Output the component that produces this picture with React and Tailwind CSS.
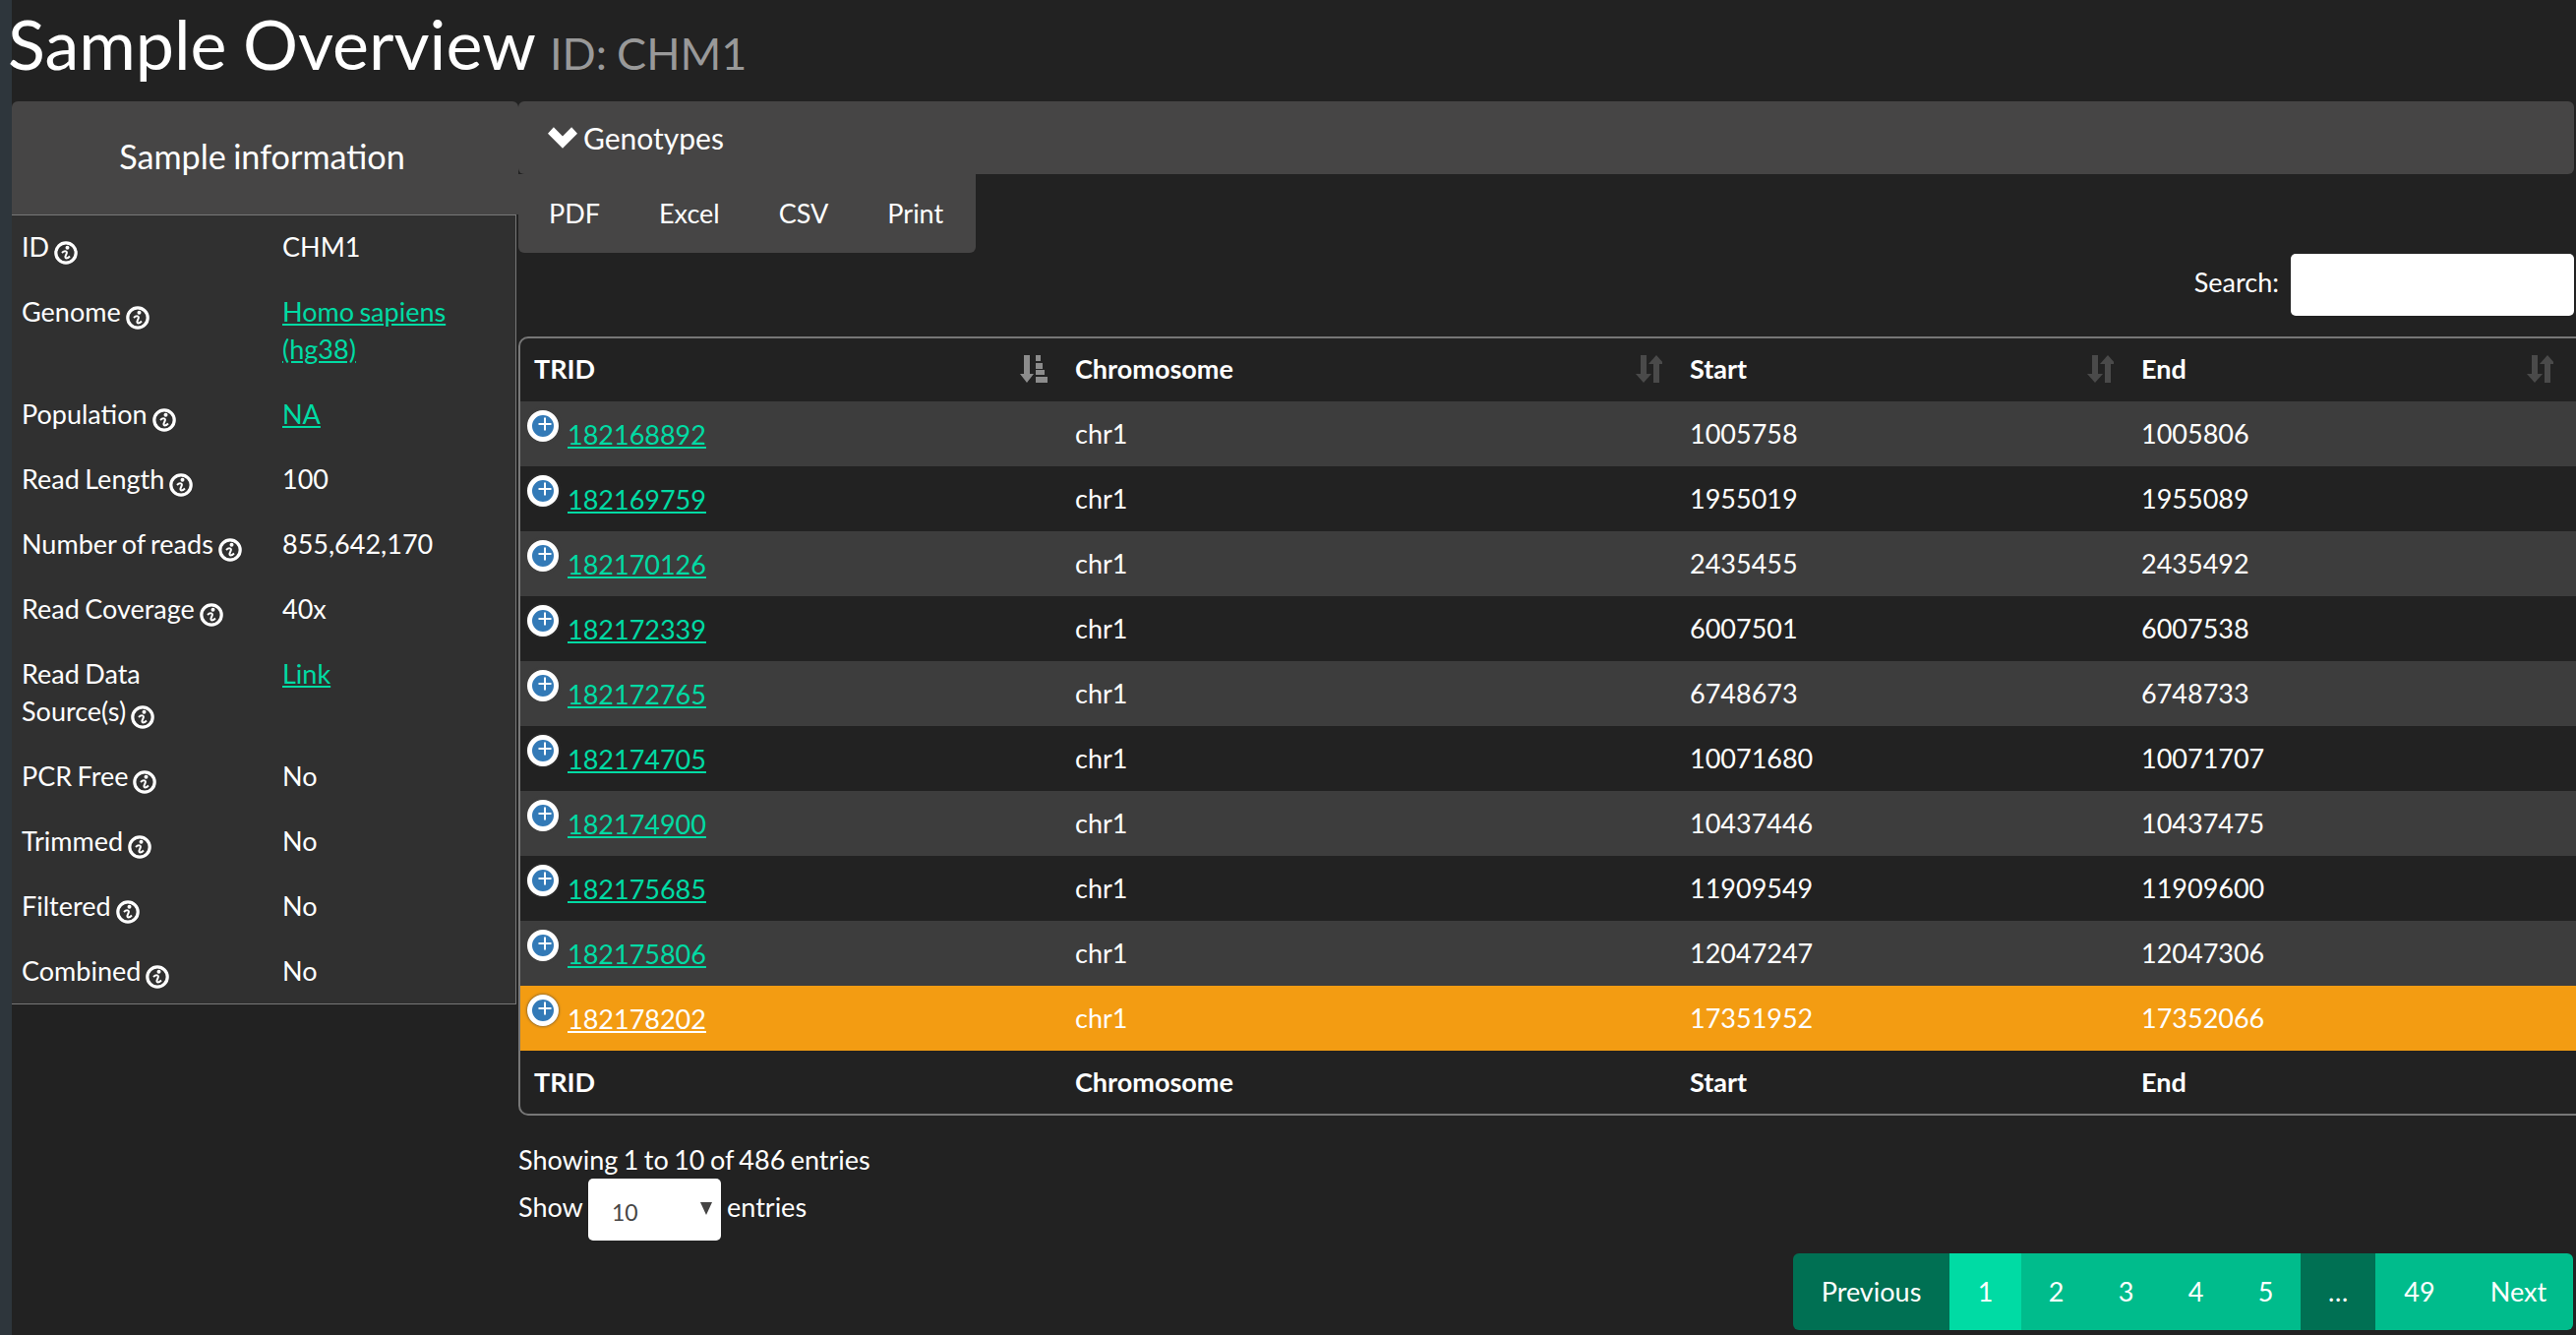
import React from 'react';

const font = { fontFamily: 'Lato, sans-serif' };

// Sample fields >>>>>>>>>>>>>>>>
const info = [
    { label: 'ID', value: 'CHM1' },
    { label: 'Genome', value: 'Homo sapiens (hg38)', link: true },
    { label: 'Population', value: 'NA', link: true },
    { label: 'Read Length', value: '100' },
    { label: 'Number of reads', value: '855,642,170' },
    { label: 'Read Coverage', value: '40x' },
    { label: 'Read Data Source(s)', value: 'Link', link: true },
    { label: 'PCR Free', value: 'No' },
    { label: 'Trimmed', value: 'No' },
    { label: 'Filtered', value: 'No' },
    { label: 'Combined', value: 'No' },
];

const rows = [
    ['182168892', '1005758', '1005806'],
    ['182169759', '1955019', '1955089'],
    ['182170126', '2435455', '2435492'],
    ['182172339', '6007501', '6007538'],
    ['182172765', '6748673', '6748733'],
    ['182174705', '10071680', '10071707'],
    ['182174900', '10437446', '10437475'],
    ['182175685', '11909549', '11909600'],
    ['182175806', '12047247', '12047306'],
    ['182178202', '17351952', '17352066'],
];

const InfoIcon = () => (
    <svg viewBox="0 0 24 24" className="inline-block w-[24px] h-[24px] ml-[5px] align-[-8px]">
        <circle cx="12" cy="12" r="10.2" fill="none" stroke="white" strokeWidth="3.2" />
        <circle cx="13.500" cy="6.800" r="2" fill="white" />
        <path d="M8 12 C10.500 9.500 13.500 10 12.800 12.500 L11.500 15.500 C11 18 13.500 18 16 15.500" fill="none" stroke="white" strokeWidth="2" />
    </svg>
);

const SortIcon = () => (
    <svg viewBox="0 0 28 28" className="w-[28px] h-[28px] shrink-0" fill="#4a4a4a">
        <path d="M6 0h6v19h5l-8 9-8-9h5z" />
        <path d="M19 28V9h-5l8-9 8 9h-5v19z" />
    </svg>
);

const SortActiveIcon = () => (
    <svg viewBox="0 0 28 28" className="w-[28px] h-[28px] shrink-0" fill="#8c8c8c">
        <path d="M4 0h6v19h4l-7 9-7-9h4z" />
        <path d="M16 0h5v6h-5zM16 8h7v6h-7zM16 15h9v5h-9zM16 22h12v6H16z" />
    </svg>
);

const PlusButton = () => (
    <span className="absolute left-[7px] top-[9px] w-[32px] h-[32px] rounded-full border-[5px] border-white bg-[#337ab7] shadow-[0_0_3px_#444]">
        <svg viewBox="0 0 22 22" className="w-[22px] h-[22px]">
            <path d="M13 2.500v13M6.500 9h13" stroke="white" strokeWidth="2" />
        </svg>
    </span>
);

const Cell = ({ children, className = '' }) => (
    <td className={`px-[14px] py-0 align-middle ${className}`}>{children}</td>
);

const PageButton = ({ label, className = '' }) => (
    <span className={`h-[78px] flex items-center justify-center text-white ${className}`}>{label}</span>
);

const App = () => {
    return (
        <div className="flex w-[2619px] h-[1357px] overflow-hidden bg-[#222222] text-white text-[27px] leading-[38px] [word-spacing:-1.5px]" style={font}>
            {/* // Left strip */}
            <div className="w-[12px] shrink-0 bg-[#2e363c]" />

            <div className="flex-1 min-w-0">
                {/* // Title */}
                <div className="h-[103px] flex items-baseline -ml-[4px] whitespace-nowrap">
                    <h1 className="text-[70px] leading-[88px] font-normal">Sample Overview</h1>
                    <span className="ml-[14px] text-[45px] text-[#999999]">ID: CHM1</span>
                </div>

                <div className="flex">
                    {/* // Sample information */}
                    <div className="w-[515px] shrink-0">
                        <div className="h-[115px] pr-[6px] pb-[3px] bg-[#464545] rounded-t-[6px] flex items-center justify-center text-[34.2px]">
                            Sample information
                        </div>
                        <div className="w-[513px] h-[803px] bg-[#303030] border border-[#777777] border-l-0 pl-[10px] pt-[13px]">
                            {info.map((item) => (
                                <div key={item.label} className="flex mb-[28px] last:mb-0">
                                    <div className="w-[265px] shrink-0 pr-[38px]">
                                        {item.label}<InfoIcon />
                                    </div>
                                    <div className="flex-1 pr-[40px]">
                                        {item.link
                                            ? <a className="underline text-[#00dba4]">{item.value}</a>
                                            : item.value}
                                    </div>
                                </div>
                            ))}
                        </div>
                    </div>

                    {/* // Genotypes */}
                    <div className="flex-1 min-w-0">
                        <div className="h-[74px] w-[2090px] bg-[#464545] rounded-[6px] flex items-center pl-[30px] text-[30px]">
                            <svg viewBox="0 0 28 20" className="w-[30px] h-[24px] mr-[6px]" fill="white">
                                <path d="M14 20 0 6l5.500-6L14 8.500 22.500 0 28 6z" />
                            </svg>
                            Genotypes
                        </div>
                        <div className="flex w-[465px] h-[80px] items-center gap-[60px] px-[31px] bg-[#464545] rounded-b-[6px]">
                            <span>PDF</span>
                            <span>Excel</span>
                            <span>CSV</span>
                            <span>Print</span>
                        </div>
                        <div className="h-[85px] flex items-start justify-end pr-[2px] w-[2092px]">
                            <label className="flex h-[63px] mt-[1px] gap-[12px]">
                                <span className="mt-[10px]">Search:</span>
                                <span className="block w-[288px] h-[63px] bg-white rounded-[5px]" />
                            </label>
                        </div>

                        {/* // Table */}
                        <div className="w-[2110px] border-2 border-[#777777] rounded-[10px] overflow-hidden">
                            <table className="table-fixed border-collapse w-full">
                                <colgroup>
                                    <col className="w-[550px]" />
                                    <col className="w-[625px]" />
                                    <col className="w-[459px]" />
                                    <col />
                                </colgroup>
                                <thead>
                                    <tr className="h-[64px] font-bold">
                                        <Cell className="pb-[2px]"><span className="flex items-center justify-between">TRID<SortActiveIcon /></span></Cell>
                                        <Cell className="pb-[2px]"><span className="flex items-center justify-between">Chromosome<SortIcon /></span></Cell>
                                        <Cell className="pb-[2px]"><span className="flex items-center justify-between">Start<SortIcon /></span></Cell>
                                        <Cell className="pb-[2px]"><span className="flex items-center justify-between w-[419px]">End<SortIcon /></span></Cell>
                                    </tr>
                                </thead>
                                <tbody>
                                    {rows.map((row, i) => {
                                        const active = i === 9;
                                        const bg = active ? 'bg-[#f39c12]' : i % 2 === 0 ? 'bg-[#3d3d3d]' : 'bg-[#222222]';
                                        return (
                                            <tr key={row[0]} className={`h-[66px] ${bg}`}>
                                                <td className="relative pl-[48px] pt-[1px] align-middle">
                                                    <PlusButton />
                                                    <a className={`underline ${active ? 'text-white' : 'text-[#00dba4]'}`}>{row[0]}</a>
                                                </td>
                                                <Cell>chr1</Cell>
                                                <Cell>{row[1]}</Cell>
                                                <Cell>{row[2]}</Cell>
                                            </tr>
                                        );
                                    })}
                                </tbody>
                                <tfoot>
                                    <tr className="h-[64px] font-bold">
                                        <Cell>TRID</Cell>
                                        <Cell>Chromosome</Cell>
                                        <Cell>Start</Cell>
                                        <Cell>End</Cell>
                                    </tr>
                                </tfoot>
                            </table>
                        </div>

                        {/* // Footer */}
                        <div className="mt-[26px]">Showing 1 to 10 of 486 entries</div>
                        <div className="flex h-[63px]">
                            <span className="mt-[10px] w-[71px]">Show</span>
                            <span className="relative block w-[135px] h-[63px] mr-[6px] bg-white rounded-[5px] text-[#464545] text-[23px] leading-[64px] pl-[24px] pt-[2px]">
                                10
                                <span className="absolute right-[9px] top-[24px] w-0 h-0 border-x-[6px] border-x-transparent border-t-[13px] border-t-[#464545]" />
                            </span>
                            <span className="mt-[10px]">entries</span>
                        </div>
                        <div className="flex justify-end w-[2089px] mt-[13px]">
                            <div className="flex rounded-[6px] overflow-hidden">
                                <PageButton label="Previous" className="w-[159px] bg-[#007053]" />
                                <PageButton label="1" className="w-[73px] bg-[#00dba4]" />
                                <PageButton label="2" className="w-[71px] bg-[#00bc8c]" />
                                <PageButton label="3" className="w-[71px] bg-[#00bc8c]" />
                                <PageButton label="4" className="w-[71px] bg-[#00bc8c]" />
                                <PageButton label="5" className="w-[71px] bg-[#00bc8c]" />
                                <PageButton label="…" className="w-[76px] bg-[#007053]" />
                                <PageButton label="49" className="w-[90px] bg-[#00bc8c]" />
                                <PageButton label="Next" className="w-[111px] bg-[#00bc8c]" />
                            </div>
                        </div>
                    </div>
                </div>
            </div>
        </div>
    );
};

export default App;
